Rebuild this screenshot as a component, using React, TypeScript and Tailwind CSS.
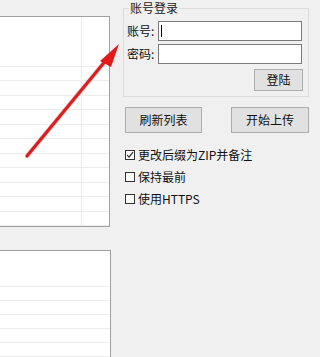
import React from "react";

const font = { fontFamily: '"Noto Sans CJK SC", "Microsoft YaHei", sans-serif' };

const Row = ({ h }: { h: string }) => (
  <div className={`${h} border-b border-[#ececec] flex`}>
    <div className="w-[82px] border-r border-[#ececec]" />
  </div>
);

const Check = ({ checked, label }: { checked?: boolean; label: string }) => (
  <div className="h-[22px] flex items-center gap-[3px] pl-[2px]">
    <span className="w-[10px] h-[10px] border border-[#333] bg-white flex items-center justify-center">
      {checked && (
        <svg width="8" height="8" viewBox="0 0 8 8">
          <path d="M1 4 L3 6.2 L7 1.2" fill="none" stroke="#222" strokeWidth="1.1" />
        </svg>
      )}
    </span>
    <span className="text-[12px] leading-[14px] text-[#111]">{label}</span>
  </div>
);

export default function App() {
  return (
    <div className="relative w-[320px] h-[357px] bg-[#f0f0f0] overflow-hidden flex" style={font}>
      {/* left lists */}
      <div className="w-[111px] flex flex-col pt-[16px]">
        <div className="w-[110px] h-[211px] bg-white border-y border-r border-[#a0a0a0] flex flex-col overflow-hidden">
          <div className="h-[35px] flex">
            <div className="w-[82px] border-r border-[#ececec]" />
          </div>
          {Array.from({ length: 12 }).map((_, i) => (
            <Row key={i} h={i % 2 ? "h-[14px]" : "h-[15px]"} />
          ))}
        </div>
        <div className="mt-[23px] flex-1 bg-white border-t border-r border-[#a0a0a0] flex flex-col">
          <div className="h-[36px] border-b border-[#ececec]" />
          {Array.from({ length: 5 }).map((_, i) => (
            <div key={i} className="h-[14px] border-b border-[#ececec]" />
          ))}
        </div>
      </div>

      {/* right controls */}
      <div className="ml-[12px] w-[186px] flex flex-col">
        <fieldset className="mt-[1px] h-[96px] border border-[#dcdcdc] px-[3px] pb-[5px]">
          <legend className="ml-[2px] px-[1px] text-[12px] leading-[14px] text-[#222]">账号登录</legend>
          <div className="flex items-center h-[20px] mt-[6px]">
            <span className="w-[31px] text-[12px] leading-[14px] text-[#111]">账号:</span>
            <div className="w-[144px] h-[20px] border border-[#7a7a7a] bg-white flex items-center pl-[2px]">
              <span className="w-[1px] h-[12px] bg-black" />
            </div>
          </div>
          <div className="flex items-center h-[20px] mt-[3px]">
            <span className="w-[31px] text-[12px] leading-[14px] text-[#111]">密码:</span>
            <div className="w-[144px] h-[20px] border border-[#7a7a7a] bg-white" />
          </div>
          <div className="flex justify-end pr-[2px] mt-[5px]">
            <button className="w-[49px] h-[22px] bg-[#e1e1e1] border border-[#adadad] text-[12px] text-[#111]">
              登陆
            </button>
          </div>
        </fieldset>

        <div className="flex justify-between mt-[10px] pl-[2px]">
          <button className="w-[77px] h-[26px] bg-[#e1e1e1] border border-[#adadad] text-[12px] text-[#111]">
            刷新列表
          </button>
          <button className="w-[78px] h-[26px] bg-[#e1e1e1] border border-[#adadad] text-[12px] text-[#111]">
            开始上传
          </button>
        </div>

        <div className="mt-[11px] flex flex-col">
          <Check checked label="更改后缀为ZIP并备注" />
          <Check label="保持最前" />
          <Check label="使用HTTPS" />
        </div>
      </div>

      {/* red annotation arrow */}
      <svg className="absolute left-0 top-0 pointer-events-none" width="320" height="357">
        <line x1="27" y1="156" x2="107" y2="59" stroke="#7a3030" strokeOpacity="0.25" strokeWidth="4.5" strokeLinecap="round" />
        <line x1="27" y1="156" x2="107" y2="59" stroke="#e11b1b" strokeWidth="3" strokeLinecap="round" />
        <polygon points="119,44 100,61 111,67" fill="#e11b1b" />
      </svg>
    </div>
  );
}
